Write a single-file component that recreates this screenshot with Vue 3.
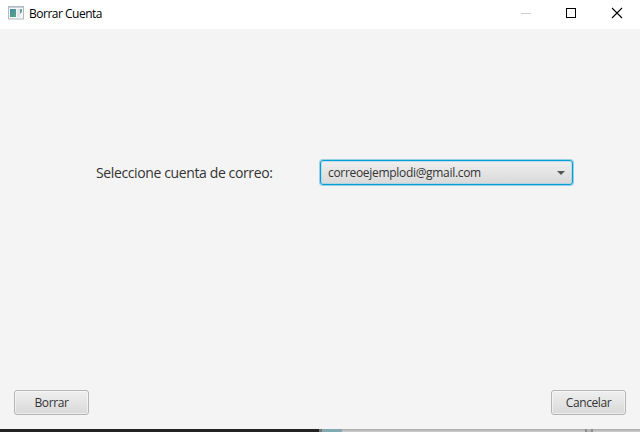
<script setup>
import { ref } from 'vue'

const account = ref('correoejemplodi@gmail.com')
</script>

<template>
  <div class="screen">
    <main class="window">
      <header class="titlebar">
        <svg class="app-icon" width="16" height="14" viewBox="0 0 16 14">
          <defs>
            <linearGradient id="pane" x1="0" y1="0" x2="1" y2="1">
              <stop offset="0" stop-color="#4a86b0" />
              <stop offset="1" stop-color="#55a87b" />
            </linearGradient>
          </defs>
          <rect x="0.5" y="0.5" width="15" height="12.5" fill="#f5f6f7" stroke="#b3b9bd" />
          <path d="M1 1.5h14" stroke="#cbd1d5" />
          <rect x="2" y="3" width="6" height="8" fill="url(#pane)" />
          <rect x="9" y="3" width="3" height="8" fill="#e1e5e7" />
          <path d="M12 3h2v3l-2 2z" fill="#65a990" />
        </svg>
        <h1 class="title">Borrar Cuenta</h1>
        <div class="controls">
          <svg width="46" height="28" viewBox="0 0 46 28"><path d="M19 13.5h10" stroke="#cccccc" /></svg>
          <svg width="46" height="28" viewBox="0 0 46 28"><rect x="18.5" y="8.5" width="9" height="9" fill="none" stroke="#000" /></svg>
          <svg width="46" height="28" viewBox="0 0 46 28"><path d="M18 8l10 10M28 8L18 18" stroke="#000" stroke-width="1.1" /></svg>
        </div>
      </header>
      <section class="form">
        <label class="label">Seleccione cuenta de correo:</label>
        <div class="combo">
          <span class="value">{{ account }}</span>
          <svg width="8" height="4" viewBox="0 0 8 4"><path d="M0 0h8L4 4z" fill="#555" /></svg>
        </div>
      </section>
      <footer class="actions">
        <button class="btn"><span>Borrar</span></button>
        <button class="btn"><span>Cancelar</span></button>
      </footer>
    </main>
    <div class="backdrop">
      <i class="dark"></i><i class="edge"></i><i class="teal"></i><i class="light"></i><i class="bar"></i><i class="gap"></i><i class="bar"></i><i class="rest"></i>
    </div>
  </div>
</template>

<style>
body { margin: 0; overflow: hidden; }
</style>

<style scoped>
.screen {
  width: 640px;
  height: 432px;
  display: flex;
  flex-direction: column;
  font-family: "Open Sans", "Noto Sans", sans-serif;
}
.window {
  height: 429px;
  display: flex;
  flex-direction: column;
  background: #f4f4f4;
}
.titlebar {
  height: 29px;
  display: flex;
  background: #fff;
}
.app-icon { margin: 6px 5px 0 8px; }
.title {
  margin: 0;
  font-size: 12px;
  font-weight: 400;
  line-height: 28px;
  letter-spacing: -0.5px;
  color: #000;
  white-space: nowrap;
}
.controls { margin-left: auto; display: flex; }
.form {
  flex: 1;
  display: flex;
  align-items: flex-start;
  padding: 131px 67px 0 96px;
}
.label {
  width: 224px;
  font-size: 14px;
  line-height: 26px;
  letter-spacing: -0.38px;
  color: #333;
  white-space: nowrap;
}
.combo {
  box-sizing: border-box;
  width: 253px;
  height: 25px;
  display: flex;
  align-items: center;
  justify-content: space-between;
  padding: 0 7px;
  border: 1px solid #039ed3;
  border-radius: 3px;
  background: linear-gradient(#efefef, #d9d9d9);
  box-shadow: 0 0 0 1px #0096c960, inset 0 0 0 1px #7fcbe570;
}
.value {
  font-size: 12px;
  line-height: 23px;
  letter-spacing: -0.31px;
  color: #333;
}
.actions {
  display: flex;
  justify-content: space-between;
  padding: 0 14px 14px;
}
.btn {
  box-sizing: border-box;
  width: 75px;
  height: 25px;
  padding: 0;
  border: 1px solid #b5b5b5;
  border-radius: 3px;
  background: linear-gradient(#efefef, #d9d9d9);
  box-shadow: inset 0 0 0 1px #ffffff80;
  font-family: inherit;
  font-size: 12px;
  line-height: 23px;
  letter-spacing: -0.4px;
  color: #333;
}
.backdrop {
  height: 3px;
  display: flex;
}
.dark { width: 319px; background: #232323; }
.edge { width: 3px; background: #777; }
.teal { width: 20px; background: #83a9b3; }
.light { width: 243px; background: linear-gradient(#a8a8a8, #d0d0d0); }
.bar { width: 2px; background: #8e8e8e; }
.gap { width: 4px; background: #b4b4b4; }
.rest { flex: 1; background: linear-gradient(#a8a8a8, #d0d0d0); }
</style>
